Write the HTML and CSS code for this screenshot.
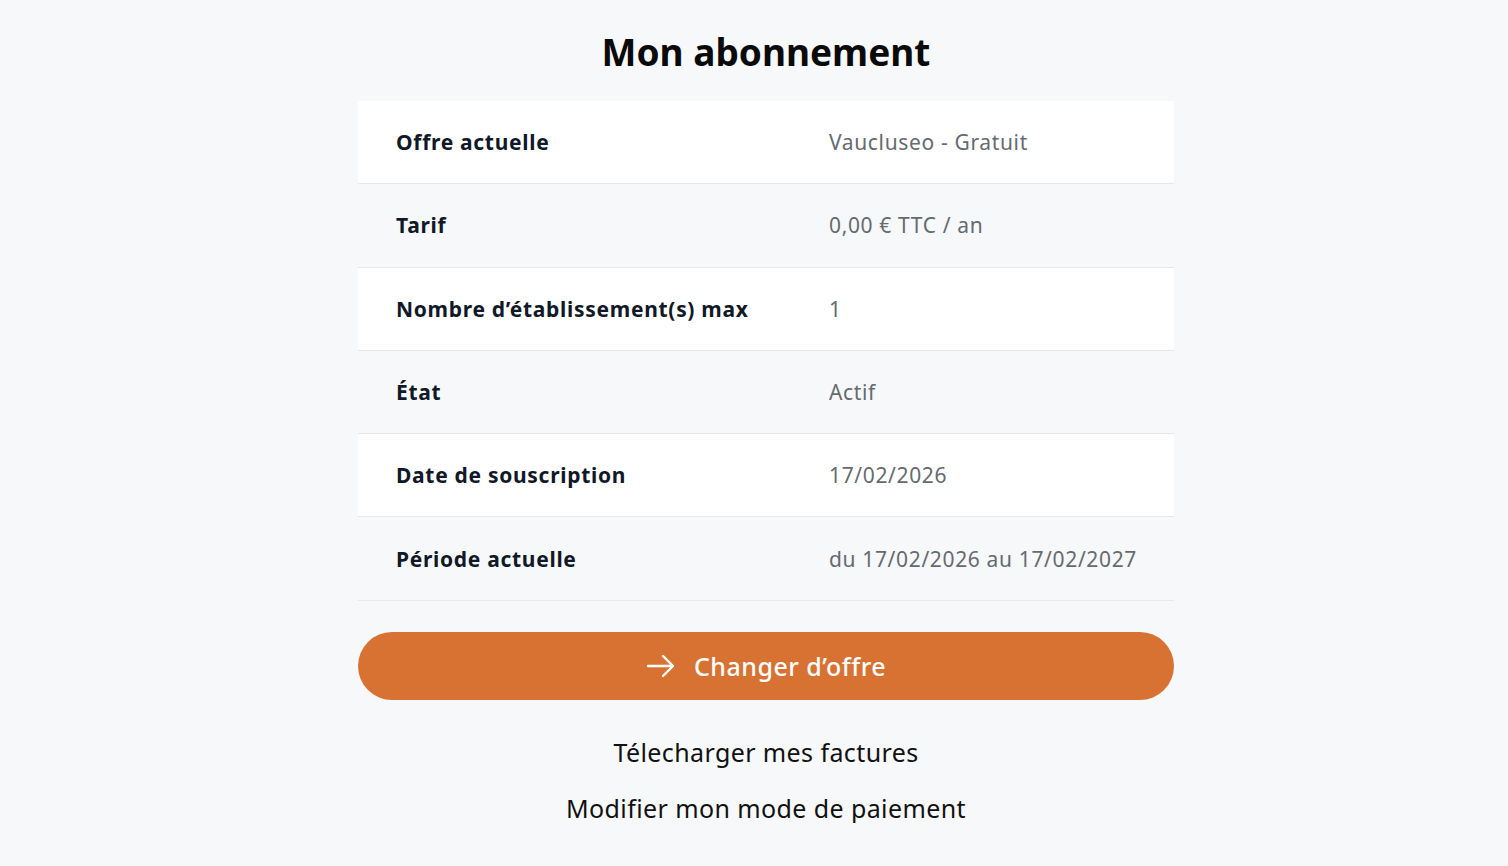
FILE: index.html
```html
<!DOCTYPE html>
<html lang="fr">
<head>
<meta charset="utf-8">
<title>Mon abonnement</title>
<link rel="stylesheet" href="styles.css">
</head>
<body>
<main class="page">
  <h1 class="title">Mon abonnement</h1>
  <div class="table">
    <div class="cell label white">Offre actuelle</div>
    <div class="cell value white">Vaucluseo - Gratuit</div>
    <div class="cell label">Tarif</div>
    <div class="cell value">0,00 € TTC / an</div>
    <div class="cell label white">Nombre d’établissement(s) max</div>
    <div class="cell value white">1</div>
    <div class="cell label">État</div>
    <div class="cell value">Actif</div>
    <div class="cell label white">Date de souscription</div>
    <div class="cell value white">17/02/2026</div>
    <div class="cell label">Période actuelle</div>
    <div class="cell value">du 17/02/2026 au 17/02/2027</div>
  </div>
  <button class="btn" type="button">
    <svg class="arrow" width="30" height="24" viewBox="0 0 30 24" fill="none" stroke="#fff" stroke-width="2.4" stroke-linecap="round" stroke-linejoin="round"><path d="M2 12h25M17 2l10 10-10 10"/></svg>
    <span>Changer d’offre</span>
  </button>
  <a class="link" href="#">Télecharger mes factures</a>
  <a class="link" href="#">Modifier mon mode de paiement</a>
</main>
</body>
</html>
```
FILE: styles.css
```css
html, body {
  margin: 0;
  padding: 0;
  background: #f7f8fa;
}
body {
  font-family: "Noto Sans", "Lato", sans-serif;
  color: #111;
  padding-left: 24px;
}
.page {
  width: 816px;
  margin: 0 auto;
  display: flex;
  flex-direction: column;
  align-items: stretch;
  padding-top: 28px;
}
.title {
  margin: 0 0 25px;
  text-align: center;
  font-size: 37px;
  font-weight: 700;
  line-height: 48px;
  color: #0a0a0a;
}
.table {
  display: grid;
  grid-template-columns: 1fr auto;
}
.cell {
  height: 82.3px;
  display: flex;
  align-items: center;
  border-bottom: 1px solid #e6e8ec;
  font-size: 21px;
  padding: 0 37px 0 38px;
}
.white {
  background: #ffffff;
}
.label {
  font-weight: 700;
  color: #111827;
  letter-spacing: 0.7px;
}
.value {
  color: #666a70;
  letter-spacing: 0.65px;
}
.btn {
  margin-top: 31px;
  height: 68px;
  border: none;
  border-radius: 34px;
  background: #d87233;
  color: #fff;
  font-family: inherit;
  font-size: 25px;
  font-weight: 500;
  letter-spacing: 0.5px;
  display: flex;
  align-items: center;
  justify-content: center;
  gap: 18px;
  padding: 0;
  cursor: pointer;
}
.arrow {
  display: block;
}
.link {
  text-align: center;
  color: #111;
  text-decoration: none;
  font-size: 25px;
  letter-spacing: 0.4px;
  line-height: 30px;
}
.btn + .link {
  margin-top: 37px;
}
.link + .link {
  margin-top: 26px;
}
```
